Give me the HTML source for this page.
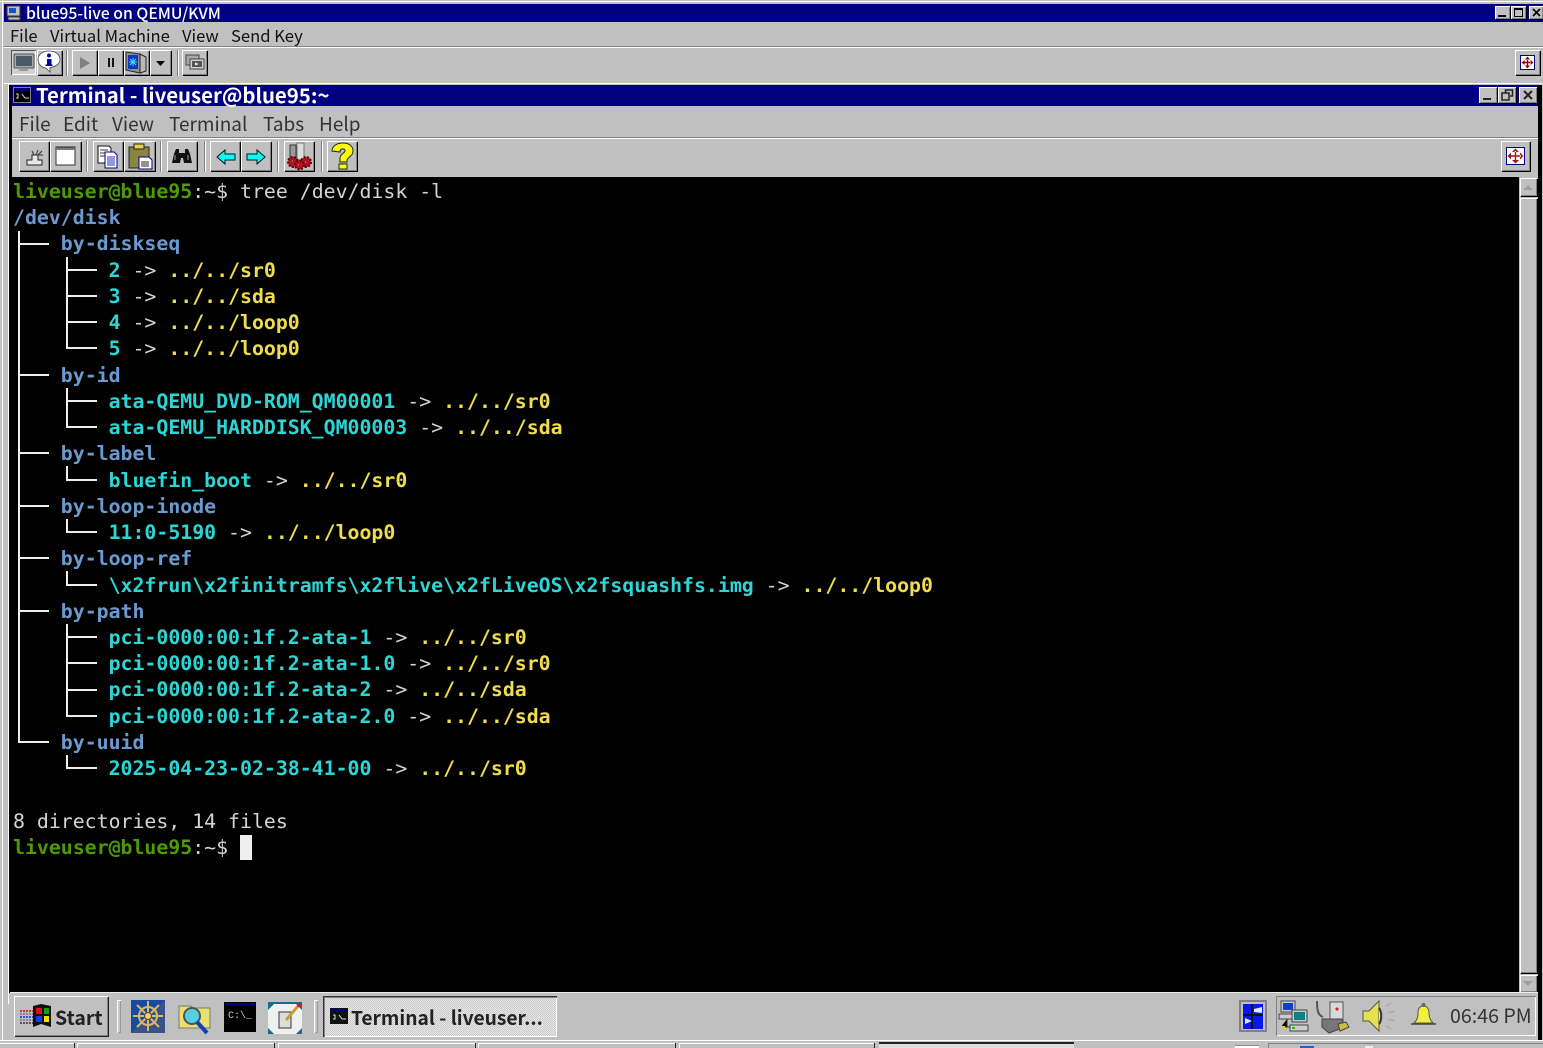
<!DOCTYPE html>
<html><head><meta charset="utf-8"><style>
*{box-sizing:border-box;margin:0;padding:0}
html,body{width:1543px;height:1048px;overflow:hidden;background:#c0c0c0}
body{position:relative;font-family:"Noto Sans CJK JP","Liberation Sans",sans-serif}
.a{position:absolute}
.t{position:absolute;white-space:pre;line-height:1}
.b{position:absolute;background:#c0c0c0;box-shadow:inset 1px 1px 0 #fff,inset -1px -1px 0 #808080,1px 1px 0 #000}
.sep{position:absolute;width:2px;background:#808080;border-right:1px solid #fff}
svg{position:absolute;overflow:visible}
#term{position:absolute;left:13px;top:179px;font:bold 19.85px/26.24px "DejaVu Sans Mono","Liberation Mono",monospace;white-space:pre;color:#d3d7cf}
.g{color:#4e9a06}.w{color:#d3d7cf;font-weight:normal}.d{color:#6b9ad0}.c{color:#2dd5d5}.y{color:#f0dc4e}
</style></head><body>
<div class="a" style="left:0;top:1px;width:1543px;height:1px;background:#fff"></div>
<div class="a" style="left:2px;top:0;width:1px;height:1040px;background:#fff"></div>
<div class="a" style="left:4px;top:4px;width:1539px;height:18px;background:#000080"></div>
<svg style="left:6px;top:5px" width="16" height="16" viewBox="0 0 16 16"><rect x="1" y="1" width="13" height="10" fill="#c0c0c0" stroke="#333"/><rect x="3" y="3" width="7" height="5" fill="#1a4fd0"/><rect x="2" y="12" width="12" height="3" fill="#c0c0c0" stroke="#333"/></svg>
<div class="t" style="left:26px;top:4px;font-size:15.8px;line-height:18px;color:#fff;font-weight:500">blue95-live on QEMU/KVM</div>
<div class="b" style="left:1495px;top:6px;width:15px;height:13px"></div><div class="a" style="left:1498px;top:15px;width:8px;height:2px;background:#000"></div>
<div class="b" style="left:1511px;top:6px;width:15px;height:13px"></div><div class="a" style="left:1514px;top:8px;width:9px;height:9px;border:1px solid #000;border-top-width:2px"></div>
<div class="b" style="left:1529px;top:6px;width:14px;height:13px"></div>
<svg style="left:1529px;top:6px" width="14" height="13"><path d="M4 3l7 7M11 3l-7 7" stroke="#000" stroke-width="1.6"/></svg>

<div class="t" style="left:10px;top:24px;font-size:16.6px;color:#111;line-height:22px">File</div>
<div class="t" style="left:50px;top:24px;font-size:16.6px;color:#111;line-height:22px">Virtual Machine</div>
<div class="t" style="left:182px;top:24px;font-size:16.6px;color:#111;line-height:22px">View</div>
<div class="t" style="left:231px;top:24px;font-size:16.6px;color:#111;line-height:22px">Send Key</div>
<div class="a" style="left:4px;top:46px;width:1539px;height:1px;background:#808080"></div>
<div class="a" style="left:4px;top:47px;width:1539px;height:1px;background:#fff"></div>

<!-- VM toolbar -->
<div class="a" style="left:11px;top:50px;width:25px;height:25px;background:#d0d0d0;box-shadow:inset 1px 1px 0 #555,inset -1px -1px 0 #fff"></div>
<svg style="left:13px;top:53px" width="22" height="20" viewBox="0 0 22 20"><rect x="1" y="1" width="20" height="14" rx="1" fill="#a8a8a8" stroke="#555"/><rect x="3" y="3" width="16" height="10" fill="#4a5a68"/><path d="M7 16h8v2H5z" fill="#999"/></svg>
<div class="b" style="left:37px;top:50px;width:25px;height:25px"></div>
<svg style="left:37px;top:50px" width="24" height="24" viewBox="0 0 24 24"><path d="M12 1C5 1 1 5 1 9.500S5 18 9 18l4 4v-4.500c5-.5 10-3.500 10-8S19 1 12 1z" fill="#fff" stroke="#444" stroke-width=".8"/><rect x="10" y="9" width="4.500" height="6.500" fill="#0000a0"/><circle cx="12" cy="5.500" r="2" fill="#0000a0"/><rect x="8.500" y="14.500" width="7" height="1.500" fill="#0000a0"/></svg>
<div class="sep" style="left:66px;top:50px;height:26px"></div>
<div class="b" style="left:72px;top:50px;width:25px;height:25px"></div>
<svg style="left:72px;top:50px" width="25" height="25"><path d="M8 7l10 6-10 6z" fill="#808080"/></svg>
<div class="b" style="left:98px;top:50px;width:25px;height:25px"></div>
<div class="a" style="left:108px;top:58px;width:2px;height:9px;background:#111"></div><div class="a" style="left:112px;top:58px;width:2px;height:9px;background:#111"></div>
<div class="b" style="left:124px;top:50px;width:25px;height:25px"></div>
<svg style="left:124px;top:50px" width="25" height="25"><path d="M2 2l14 2v19L2 20z" fill="#909090" stroke="#222"/><path d="M16 4l6 3v14l-6 2z" fill="#b8b8b8" stroke="#222"/><rect x="4" y="5" width="10" height="14" fill="#0c36c0"/><path d="M9 8v8M5 12h8M6 9l6 6M12 9l-6 6" stroke="#40e0f0"/></svg>
<div class="b" style="left:150px;top:50px;width:21px;height:25px"></div>
<svg style="left:150px;top:50px" width="21" height="25"><path d="M6 11h9l-4.500 5z" fill="#000"/></svg>
<div class="sep" style="left:177px;top:50px;height:26px"></div>
<div class="b" style="left:182px;top:50px;width:25px;height:25px"></div>
<svg style="left:182px;top:50px" width="25" height="25"><rect x="4" y="5" width="13" height="10" fill="#a8a8a8" stroke="#444"/><rect x="8" y="9" width="14" height="10" fill="#d0d0d0" stroke="#444"/><rect x="10" y="11" width="10" height="6" fill="#555"/><path d="M13 12.500l4 1.500-4 1.500z" fill="#eee"/></svg>
<div class="b" style="left:1515px;top:50px;width:25px;height:25px"></div>
<svg style="left:1520px;top:55px" width="15" height="15" viewBox="0 0 15 15"><rect x=".5" y=".5" width="14" height="14" fill="#fff" stroke="#000080"/><path d="M7.500 1.500l-2.500 3h5zM7.500 13.500l-2.500-3h5zM1.500 7.500l3-2.500v5zM13.500 7.500l-3-2.500v5zM6.800 4h1.400v7H6.800zM4 6.800h7v1.400H4z" fill="#8b0000"/></svg>

<div class="a" style="left:4px;top:83px;width:1539px;height:1px;background:#fff"></div>
<div class="a" style="left:8px;top:84px;width:1px;height:920px;background:#fff"></div>

<!-- Terminal window -->
<div class="a" style="left:9px;top:85px;width:3px;height:908px;background:#000"></div>
<div class="a" style="left:1538px;top:85px;width:4px;height:955px;background:#000"></div>
<div class="a" style="left:9px;top:85px;width:1529px;height:2px;background:#000"></div>
<div class="a" style="left:12px;top:85px;width:1526px;height:21px;background:#000080"></div>
<svg style="left:13px;top:87px" width="18" height="16" viewBox="0 0 18 16"><rect width="18" height="16" fill="#808080"/><rect x="1" y="1" width="16" height="3" fill="#000080"/><rect x="1" y="4" width="16" height="11" fill="#000"/><path d="M3 7H5V11H3M7 8h.1M7 10h.1M9 7l3 4M12 11h4" stroke="#ddd" fill="none" stroke-width="1"/></svg>
<div class="t" style="left:36px;top:83px;font-size:20.4px;line-height:23px;color:#fff;font-weight:700">Terminal - liveuser@blue95:~</div>
<div class="b" style="left:1479px;top:87px;width:18px;height:16px"></div><div class="a" style="left:1483px;top:98px;width:8px;height:2px;background:#222"></div>
<div class="b" style="left:1498px;top:87px;width:18px;height:16px"></div>
<svg style="left:1498px;top:87px" width="18" height="16"><path d="M7.500 5.500V3h7v6H12M4 6h7v7H4z" fill="none" stroke="#222" stroke-width="1.500"/></svg>
<div class="b" style="left:1519px;top:87px;width:18px;height:16px"></div>
<svg style="left:1519px;top:87px" width="18" height="16"><path d="M5 4l8 8M13 4l-8 8" stroke="#222" stroke-width="2"/></svg>

<div class="t" style="left:19px;top:112px;font-size:19px;line-height:24px;color:#333">File</div>
<div class="t" style="left:63px;top:112px;font-size:19px;line-height:24px;color:#333">Edit</div>
<div class="t" style="left:112px;top:112px;font-size:19px;line-height:24px;color:#333">View</div>
<div class="t" style="left:169px;top:112px;font-size:19px;line-height:24px;color:#333">Terminal</div>
<div class="t" style="left:263px;top:112px;font-size:19px;line-height:24px;color:#333">Tabs</div>
<div class="t" style="left:319px;top:112px;font-size:19px;line-height:24px;color:#333">Help</div>
<div class="a" style="left:12px;top:137px;width:1526px;height:1px;background:#808080"></div>
<div class="a" style="left:12px;top:138px;width:1526px;height:1px;background:#fff"></div>

<!-- Terminal toolbar -->
<div class="b" style="left:19px;top:141px;width:30px;height:30px"></div>
<svg style="left:19px;top:141px" width="30" height="30"><path d="M8 24h15v-5h-4v-5h-6v5H8z" fill="#e8e8e8" stroke="#222"/><path d="M19 9l-2 5M23 10l-4 4M24 14h-4M13 10l2 4" stroke="#333"/></svg>
<div class="b" style="left:50px;top:141px;width:31px;height:30px"></div>
<svg style="left:50px;top:141px" width="31" height="30"><rect x="6" y="6" width="19" height="18" fill="#fff" stroke="#333"/><rect x="6" y="6" width="19" height="3" fill="#777"/><path d="M6 6h19" stroke="#222"/></svg>
<div class="sep" style="left:86px;top:141px;height:31px"></div>
<div class="b" style="left:93px;top:141px;width:30px;height:30px"></div>
<svg style="left:93px;top:141px" width="30" height="30"><path d="M5 5h11l2 2v15H5z" fill="#fff" stroke="#111"/><path d="M7 9h8M7 12h8M7 15h8" stroke="#333"/><path d="M12 11h9l3 3v13H12z" fill="#fff" stroke="#000080"/><path d="M14 16h8M14 18h8M14 20h8M14 22h8M14 24h8" stroke="#2030c0"/></svg>
<div class="b" style="left:124px;top:141px;width:31px;height:30px"></div>
<svg style="left:124px;top:141px" width="31" height="30"><rect x="5" y="6" width="20" height="21" fill="#8a8640" stroke="#222"/><rect x="10" y="3" width="10" height="5" fill="#e8d050" stroke="#222"/><path d="M15 16h10l3 3v9H15z" fill="#fff" stroke="#000080"/><path d="M17 21h8M17 23h8M17 25h8" stroke="#222"/></svg>
<div class="sep" style="left:160px;top:141px;height:31px"></div>
<div class="b" style="left:167px;top:141px;width:30px;height:30px"></div>
<svg style="left:167px;top:141px" width="30" height="30"><path d="M9 8h3v4h6V8h3l2 5 2 9h-8l-1-5h-2l-1 5H5l2-9z" fill="#111"/><path d="M8 14v5M21 14v5" stroke="#999"/></svg>
<div class="sep" style="left:204px;top:141px;height:31px"></div>
<div class="b" style="left:210px;top:141px;width:30px;height:30px"></div>
<svg style="left:210px;top:141px" width="30" height="30"><path d="M7 16l8-7v4h10v6H15v4z" fill="#00ffff" stroke="#111"/></svg>
<div class="b" style="left:241px;top:141px;width:30px;height:30px"></div>
<svg style="left:241px;top:141px" width="30" height="30"><path d="M24 16l-8-7v4H6v6h10v4z" fill="#00ffff" stroke="#111"/></svg>
<div class="sep" style="left:277px;top:141px;height:31px"></div>
<div class="b" style="left:284px;top:141px;width:30px;height:30px"></div>
<svg style="left:284px;top:141px" width="30" height="30"><rect x="6" y="4" width="6" height="14" fill="#999" stroke="#333"/><rect x="13" y="2" width="7" height="17" fill="#ddd" stroke="#777"/><g fill="#b01028" stroke="#600"><circle cx="9" cy="21" r="5" stroke-dasharray="2 1.500" stroke-width="2"/><circle cx="22" cy="21" r="5" stroke-dasharray="2 1.500" stroke-width="2"/><circle cx="15.500" cy="24" r="4.500" stroke-dasharray="2 1.500" stroke-width="2"/></g><path d="M8 20h1M14 24h1M21 21h1" stroke="#f0a0a0"/></svg>
<div class="sep" style="left:321px;top:141px;height:31px"></div>
<div class="b" style="left:327px;top:141px;width:30px;height:30px"></div>
<svg style="left:327px;top:141px" width="30" height="30"><path d="M5 10c0-5 5-8 11-8s10 3 10 8c0 5-5 6-6 9v2h-7v-4c0-4 5-5 5-7 0-3-5-3-5 1z" fill="#ffff00" stroke="#222"/><rect x="12" y="23" width="8" height="5" fill="#ffff00" stroke="#222"/></svg>
<div class="b" style="left:1501px;top:141px;width:29px;height:30px"></div>
<svg style="left:1506px;top:147px" width="19" height="18" viewBox="0 0 19 18"><rect x=".5" y=".5" width="18" height="17" fill="#fff" stroke="#000080"/><path d="M9.500 1.500l-3.500 3.500h7zM9.500 16.500l-3.500-3.500h7zM1.500 9l3.500-3.500v7zM17.500 9l-3.500-3.500v7zM8.800 4h1.400v10H8.800zM4 8.300h11v1.400H4z" fill="#a01818"/></svg>

<!-- Terminal black -->
<div class="a" style="left:12px;top:177px;width:1507px;height:816px;background:#000"></div>
<pre id="term"><span class="g">liveuser@blue95</span><span class="w">:~$ tree /dev/disk -l</span>
<span class="d">/dev/disk</span>
    <span class="d">by-diskseq</span>
        <span class="c">2</span><span class="w"> -&gt; </span><span class="y">../../sr0</span>
        <span class="c">3</span><span class="w"> -&gt; </span><span class="y">../../sda</span>
        <span class="c">4</span><span class="w"> -&gt; </span><span class="y">../../loop0</span>
        <span class="c">5</span><span class="w"> -&gt; </span><span class="y">../../loop0</span>
    <span class="d">by-id</span>
        <span class="c">ata-QEMU_DVD-ROM_QM00001</span><span class="w"> -&gt; </span><span class="y">../../sr0</span>
        <span class="c">ata-QEMU_HARDDISK_QM00003</span><span class="w"> -&gt; </span><span class="y">../../sda</span>
    <span class="d">by-label</span>
        <span class="c">bluefin_boot</span><span class="w"> -&gt; </span><span class="y">../../sr0</span>
    <span class="d">by-loop-inode</span>
        <span class="c">11:0-5190</span><span class="w"> -&gt; </span><span class="y">../../loop0</span>
    <span class="d">by-loop-ref</span>
        <span class="c">\x2frun\x2finitramfs\x2flive\x2fLiveOS\x2fsquashfs.img</span><span class="w"> -&gt; </span><span class="y">../../loop0</span>
    <span class="d">by-path</span>
        <span class="c">pci-0000:00:1f.2-ata-1</span><span class="w"> -&gt; </span><span class="y">../../sr0</span>
        <span class="c">pci-0000:00:1f.2-ata-1.0</span><span class="w"> -&gt; </span><span class="y">../../sr0</span>
        <span class="c">pci-0000:00:1f.2-ata-2</span><span class="w"> -&gt; </span><span class="y">../../sda</span>
        <span class="c">pci-0000:00:1f.2-ata-2.0</span><span class="w"> -&gt; </span><span class="y">../../sda</span>
    <span class="d">by-uuid</span>
        <span class="c">2025-04-23-02-38-41-00</span><span class="w"> -&gt; </span><span class="y">../../sr0</span>

<span class="w">8 directories, 14 files</span>
<span class="g">liveuser@blue95</span><span class="w">:~$ </span></pre>
<div class="a" style="left:240px;top:835px;width:12px;height:25px;background:#eee"></div>
<svg style="left:0;top:0" width="1543" height="1048"><g stroke="#eee" stroke-width="2" fill="none">
<path d="M19 231V742H49M19 244H49M19 375H49M19 453H49M19 506H49M19 558H49M19 611H49"/>
<path d="M67 257V348H97M67 270H97M67 296H97M67 322H97"/>
<path d="M67 388V427H97M67 401H97"/>
<path d="M67 466V480H97"/>
<path d="M67 519V532H97"/>
<path d="M67 571V585H97"/>
<path d="M67 624V716H97M67 637H97M67 663H97M67 690H97"/>
<path d="M67 755V768H97"/>
</g></svg>

<!-- Scrollbar -->
<div class="a" style="left:1519px;top:177px;width:19px;height:816px;background:#c0c0c0"></div>
<div class="b" style="left:1520px;top:178px;width:17px;height:18px"></div>
<svg style="left:1520px;top:178px" width="17" height="18"><path d="M3 12h10l-5-5z" fill="#a0a0a0"/></svg>
<div class="b" style="left:1520px;top:198px;width:17px;height:775px"></div>
<div class="b" style="left:1520px;top:975px;width:17px;height:17px"></div>
<svg style="left:1520px;top:975px" width="17" height="17"><path d="M3 6h10l-5 5z" fill="#a0a0a0"/></svg>

<!-- Taskbar -->
<div class="a" style="left:10px;top:992px;width:1528px;height:48px;background:#c0c0c0;border-top:1px solid #eee"></div>
<div class="a" style="left:14px;top:996px;width:94px;height:40px;background:#c0c0c0;box-shadow:inset 1px 1px 0 #fff,inset -1px -1px 0 #808080,1px 1px 0 #222"></div>
<svg style="left:20px;top:1004px" width="32" height="26" viewBox="0 0 32 26"><g stroke-width="2" stroke-dasharray="2 1"><path d="M0 7h13" stroke="#e03030"/><path d="M0 10h13" stroke="#888"/><path d="M0 13h13" stroke="#3050e0"/><path d="M0 16h13" stroke="#888"/><path d="M0 19h13" stroke="#555"/></g><path d="M13 2l8-2 10 2v21l-10-3-8 3z" fill="#111"/><rect x="16" y="4" width="6" height="6" fill="#e01010"/><rect x="24" y="4" width="5" height="6" fill="#10a010"/><rect x="16" y="12" width="6" height="6" fill="#1040e0"/><rect x="24" y="12" width="5" height="6" fill="#f0e000"/></svg>
<div class="t" style="left:55px;top:1004px;font-size:19.5px;line-height:26px;font-weight:700;color:#222">Start</div>
<div class="a" style="left:117px;top:1000px;width:4px;height:33px;background:#c8c8c8;box-shadow:inset 1px 1px 0 #fff,inset -1px -1px 0 #999"></div>
<svg style="left:131px;top:1000px" width="34" height="33" viewBox="0 0 34 33"><path d="M0 0h34v33H0z" fill="#1a4aa0"/><path d="M0 33L34 0v33z" fill="#5a5a70" opacity=".5"/><g stroke="#d8b868" stroke-width="2" fill="none"><circle cx="17" cy="16" r="9"/><path d="M17 1v30M2 16h30M6 5l22 22M28 5L6 27"/></g><circle cx="17" cy="16" r="3.500" fill="#e8d080" stroke="#604010"/></svg>
<svg style="left:178px;top:1002px" width="34" height="32" viewBox="0 0 34 32"><path d="M1 4h12l2 2h17v20H1z" fill="#e8e070" stroke="#777"/><circle cx="14" cy="14" r="8" fill="#50d0e0" stroke="#555" stroke-width="2"/><path d="M19 20l10 11" stroke="#1040c0" stroke-width="4"/></svg>
<svg style="left:224px;top:1002px" width="32" height="30" viewBox="0 0 32 30"><rect width="32" height="30" fill="#000"/><rect x="1" y="1" width="30" height="3" fill="#000080"/><text x="4" y="16" font-family="Liberation Mono,monospace" font-size="10" fill="#ccc">C:\_</text></svg>
<svg style="left:268px;top:1002px" width="34" height="32" viewBox="0 0 34 32"><path d="M0 0h34v32H0z" fill="#1a6a90"/><path d="M6 2h22l6 6v18l-6 6H6l-6-6V8z" fill="#f0f0f0"/><rect x="11" y="10" width="12" height="16" fill="#ddd" stroke="#333"/><path d="M18 18L31 3" stroke="#c8a030" stroke-width="3"/><circle cx="31" cy="3" r="2" fill="#c02020"/></svg>
<div class="a" style="left:314px;top:1000px;width:4px;height:33px;background:#c8c8c8;box-shadow:inset 1px 1px 0 #fff,inset -1px -1px 0 #999"></div>
<div class="a" style="left:323px;top:996px;width:234px;height:41px;background-color:#dcdcdc;background-image:repeating-conic-gradient(#c8c8c8 0 25%,#e8e8e8 0 50%);background-size:2px 2px;box-shadow:inset 1px 1px 0 #333,inset 2px 2px 0 #808080,inset -1px -1px 0 #fff"></div>
<svg style="left:330px;top:1008px" width="18" height="16" viewBox="0 0 18 16"><rect width="18" height="16" fill="#111"/><rect x="1" y="1" width="16" height="3" fill="#000080"/><path d="M3 7H5V11H3M7 8h.1M7 10h.1M9 7l3 4M12 11h4" stroke="#ddd" fill="none"/></svg>
<div class="t" style="left:351px;top:1004px;font-size:19.2px;line-height:26px;font-weight:700;color:#222">Terminal - liveuser...</div>

<div class="a" style="left:1239px;top:1000px;width:28px;height:32px;background:#c0c0c0;box-shadow:inset 2px 2px 0 #808080,inset -2px -2px 0 #808080"></div>
<svg style="left:1243px;top:1004px" width="20" height="25"><rect width="20" height="25" fill="#0818e8"/><path d="M9 0v25M0 11h20" stroke="#111" stroke-width="2"/><path d="M11 5l8-2v6l-8-1zM2 14l7 3-7 3z" fill="#dde8ff"/></svg>
<div class="a" style="left:1276px;top:996px;width:260px;height:40px;box-shadow:inset 1px 1px 0 #808080,inset -1px -1px 0 #fff"></div>
<svg style="left:1278px;top:1001px" width="31" height="32" viewBox="0 0 31 32"><rect x="3" y="0" width="14" height="11" fill="#c8c8c8" stroke="#444"/><rect x="5" y="2" width="10" height="7" fill="#1040d0"/><rect x="1" y="13" width="16" height="5" fill="#ccc" stroke="#444"/><rect x="14" y="9" width="15" height="12" fill="#c8c8c8" stroke="#444"/><rect x="16" y="11" width="11" height="8" fill="#108088"/><rect x="12" y="24" width="18" height="6" fill="#ccc" stroke="#444"/><path d="M9 18v8H3M9 26h3" stroke="#333"/><rect x="3" y="25" width="4" height="3" fill="#d8d040"/><rect x="14" y="26" width="3" height="2" fill="#20c020"/></svg>
<svg style="left:1316px;top:1000px" width="34" height="34" viewBox="0 0 34 34"><path d="M1 1c0 10 1 14 6 16" stroke="#555" stroke-width="2" fill="none"/><rect x="14" y="2" width="13" height="20" fill="#d8d8d8" stroke="#555"/><path d="M19 9l2-2 2 2-2 2z" fill="#e02020"/><path d="M6 19h20l3 8-16 6-7-6z" fill="#777" stroke="#444"/><path d="M22 24l8-2 3 5-9 4z" fill="#c8c040" stroke="#444"/></svg>
<svg style="left:1362px;top:1000px" width="34" height="34" viewBox="0 0 34 34"><path d="M1 11h6l10-10v30L7 21H1z" fill="#e8e050" stroke="#555"/><path d="M17 8c3 4 3 12 0 16" fill="#ddd" stroke="#333" stroke-width="2"/><path d="M24 6l5-3M26 13l7-2M26 19l7 2M24 26l5 3" stroke="#aaa" stroke-width="1.500"/></svg>
<svg style="left:1410px;top:1002px" width="27" height="24" viewBox="0 0 27 24"><path d="M1 22h25" stroke="#444" stroke-width="1.500"/><path d="M4 21c3-3 4-5 4-10s2-7 5.500-7 5.500 3 5.500 7 1 7 4 10z" fill="#f0f040" stroke="#555"/><circle cx="13.500" cy="3" r="2" fill="#666"/></svg>
<div class="t" style="left:1450px;top:1001px;font-size:19.6px;line-height:28px;color:#333">06:46 PM</div>

<!-- bottom strip -->
<div class="a" style="left:0;top:1040px;width:1543px;height:1px;background:#fff"></div>
<div class="a" style="left:0;top:1043px;width:74px;height:5px;box-shadow:inset 0 1px 0 #fff,1px 0 0 #222"></div>
<div class="a" style="left:77px;top:1043px;width:197px;height:5px;box-shadow:inset 1px 1px 0 #fff,1px 0 0 #222"></div>
<div class="a" style="left:278px;top:1043px;width:197px;height:5px;box-shadow:inset 1px 1px 0 #fff,1px 0 0 #222"></div>
<div class="a" style="left:478px;top:1043px;width:197px;height:5px;box-shadow:inset 1px 1px 0 #fff,1px 0 0 #222"></div>
<div class="a" style="left:679px;top:1043px;width:195px;height:5px;box-shadow:inset 1px 1px 0 #fff,1px 0 0 #222"></div>
<div class="a" style="left:879px;top:1042px;width:195px;height:6px;background:#ddd;box-shadow:inset 0 2px 0 #222"></div>
<div class="a" style="left:1235px;top:1045px;width:24px;height:3px;background:#fff;box-shadow:inset 0 1px 0 #888"></div>
<div class="a" style="left:1268px;top:1043px;width:275px;height:5px;box-shadow:inset 1px 1px 0 #808080"></div>
<div class="a" style="left:1300px;top:1046px;width:14px;height:2px;background:#2060d0"></div>
<div class="a" style="left:1365px;top:1046px;width:8px;height:2px;background:#eee"></div>
</body></html>
